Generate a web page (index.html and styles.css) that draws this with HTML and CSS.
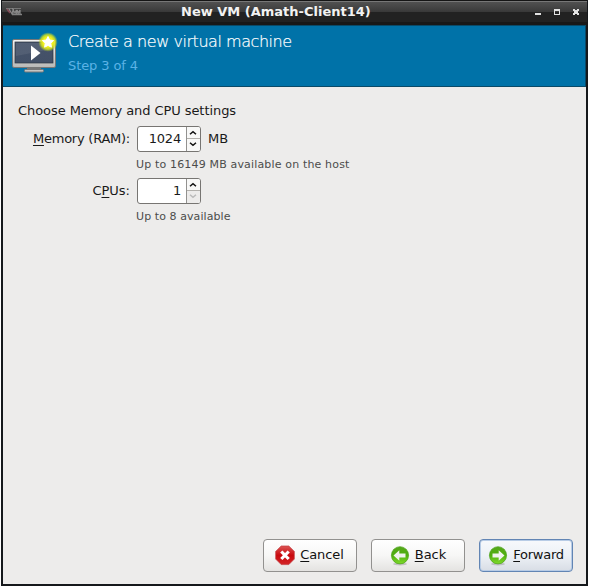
FILE: index.html
```html
<!DOCTYPE html>
<html lang="en">
<head>
<meta charset="utf-8">
<title>New VM (Amath-Client14)</title>
<link rel="stylesheet" href="styles.css">
</head>
<body>
<div class="window">
  <div class="titlebar">
    <svg class="app-icon" width="17" height="10" viewBox="0 0 17 10"><path d="M1 1.500h15" stroke="#999" opacity=".6"/><path d="M4 2l3 5 1.500-5M8 7V3l2 3 1.500-3v4M12 7V3l1.500 3L15 3v4M7 7.500h10" fill="none" stroke="#b5b5b5" stroke-width="1.300" opacity=".65"/><path d="M2 2l3 4" stroke="#a05565" stroke-width="1.500" opacity=".7"/></svg>
    <h1 class="caption">New VM (Amath-Client14)</h1>
    <svg class="controls" width="46" height="8" viewBox="0 0 46 8" shape-rendering="crispEdges" fill="#e2e2e2">
      <path d="M0 5h6v2H0z"/>
      <path fill-rule="evenodd" d="M19 1h6v6h-6zM20 3v3h4V3z"/>
      <path d="M38 1h2v1h2V1h2v2h-1v2h1v2h-2V6h-2v1h-2V5h1V3h-1z"/>
    </svg>
  </div>
  <div class="client">
    <header class="banner">
      <svg class="vm-icon" width="50" height="46" viewBox="0 0 50 46">
        <defs>
          <linearGradient id="frame" x1="0" y1="0" x2="0" y2="1"><stop offset="0" stop-color="#f4f4f4"/><stop offset="1" stop-color="#b9b9b7"/></linearGradient>
          <linearGradient id="screen" x1="0" y1="0" x2="0" y2="1"><stop offset="0" stop-color="#46536a"/><stop offset="1" stop-color="#435067"/></linearGradient>
          <radialGradient id="glow"><stop offset=".5" stop-color="#f4f41a"/><stop offset=".75" stop-color="#d9e51c" stop-opacity=".8"/><stop offset="1" stop-color="#b5d72a" stop-opacity="0"/></radialGradient>
        </defs>
        <path d="M17 36h14v4H17z" fill="#777"/>
        <rect x="14.500" y="39.500" width="19" height="2.500" rx="1" fill="#c5c5c3" stroke="#777"/>
        <rect x="2.500" y="9.500" width="43" height="28" rx="1.500" fill="url(#frame)" stroke="#777"/>
        <rect x="5" y="12" width="38" height="21" fill="url(#screen)" stroke="#2d3440" stroke-width=".7"/>
        <path d="M6 13h36v6L6 26z" fill="#fff" opacity=".08"/>
        <path d="M21 15.500l9.500 7.500-9.500 7.500z" fill="#fff"/>
        <circle cx="38" cy="12" r="9.800" fill="url(#glow)"/>
        <path d="M38 6.500l1.700 3.500 3.900.6-2.800 2.700.6 3.900-3.400-1.800-3.400 1.800.6-3.900-2.800-2.700 3.900-.6z" fill="#fff" stroke="#fff" stroke-linejoin="round"/>
      </svg>
      <div class="banner-text">
        <h2>Create a new virtual machine</h2>
        <p>Step 3 of 4</p>
      </div>
    </header>
    <main class="content">
      <p class="intro">Choose Memory and CPU settings</p>
      <div class="form">
        <label class="label memory"><u>M</u>emory (RAM):</label>
        <div class="field">
          <div class="spin"><span class="value">1024</span><svg width="14" height="24" viewBox="0 0 14 24"><path d="M0 0h14v24H0z" fill="#f8f8f7"/><path d="M0 0h1v24H0z" fill="#92918f"/><path d="M1 11.500h13" stroke="#b2b0ac"/><path d="M4 7.300l3-2.600 3 2.600M4 15.700l3 2.600 3-2.600" fill="none" stroke="#111" stroke-width="1.500"/></svg></div>
          <span class="unit">MB</span>
        </div>
        <p class="hint">Up to 16149 MB available on the host</p>
        <label class="label"><span>C<u>P</u>Us:</span></label>
        <div class="field">
          <div class="spin"><span class="value">1</span><svg width="14" height="24" viewBox="0 0 14 24"><path d="M0 0h14v24H0z" fill="#f8f8f7"/><path d="M1 12h13v12H1z" fill="#edeceb"/><path d="M0 0h1v24H0z" fill="#92918f"/><path d="M1 11.500h13" stroke="#b2b0ac"/><path d="M4 7.300l3-2.600 3 2.600" fill="none" stroke="#111" stroke-width="1.500"/><path d="M4 15.700l3 2.600 3-2.600" fill="none" stroke="#bbb" stroke-width="1.500"/></svg></div>
        </div>
        <p class="hint short">Up to 8 available</p>
      </div>
    </main>
    <footer class="actions">
      <button class="button cancel"><svg width="20" height="22" viewBox="0 0 20 22"><defs><linearGradient id="red" x1="0" y1="0" x2="0" y2="1"><stop offset="0" stop-color="#dc5555"/><stop offset=".5" stop-color="#c9090d"/><stop offset="1" stop-color="#d32528"/></linearGradient></defs><path d="M6.200 1h7.600L19.300 6.400v7.700L13.800 19.600H6.200L.7 14.100V6.400z" fill="url(#red)" stroke="#c33a3c" stroke-width=".7"/><path d="M6.300 6.500l7.400 7.500M13.700 6.500L6.300 14" stroke="#fff" stroke-width="3.200"/></svg><span><u>C</u>ancel</span></button>
      <button class="button back"><svg width="20" height="22" viewBox="0 0 20 22"><defs><linearGradient id="green" x1="0" y1="0" x2="0" y2="1"><stop offset="0" stop-color="#55a81b"/><stop offset=".5" stop-color="#4fae0d"/><stop offset="1" stop-color="#80dc2c"/></linearGradient></defs><ellipse cx="10" cy="19" rx="7" ry="1.500" fill="#999" opacity=".5"/><circle cx="10" cy="10.300" r="8.600" fill="url(#green)" stroke="#4ca11b" stroke-width=".7"/><path d="M3.500 10.500l5.800-5.300v3.300h6.200v4H9.300v3.300z" fill="#f0f3ee"/></svg><span><u>B</u>ack</span></button>
      <button class="button forward"><svg width="20" height="22" viewBox="0 0 20 22"><ellipse cx="10" cy="19" rx="7" ry="1.500" fill="#999" opacity=".5"/><circle cx="10" cy="10.300" r="8.600" fill="url(#green)" stroke="#4ca11b" stroke-width=".7"/><path d="M16.500 10.500l-5.800-5.300v3.300H4.500v4h6.200v3.300z" fill="#f0f3ee"/></svg><span><u>F</u>orward</span></button>
    </footer>
  </div>
</div>
</body>
</html>
```
FILE: styles.css
```css
* { box-sizing: border-box; }
body { margin: 0; background: #fff; font: 13px/16px "DejaVu Sans", sans-serif; color: #1a1a1a; overflow: hidden; }
h1, h2, p { margin: 0; font-weight: normal; }
u { text-underline-offset: 2px; text-decoration-thickness: 1px; text-decoration-skip-ink: none; }
.window { width: 587px; height: 586px; margin-left: 1px; background: #15181b; display: flex; flex-direction: column; }
.titlebar { height: 25px; flex: none; display: flex; padding: 0 6px 0 3px; background: linear-gradient(#151515 0 1px, #777 1px 2px, #515151 2px, #393939 12px, #222 12px 22px, #181818 22px); margin: 0 1px; }
.app-icon { margin-top: 7px; flex: none; }
.caption { font-size: 13px; font-weight: bold; line-height: 24px; color: #f2f2f2; white-space: nowrap; margin-left: 159px; }
.controls { margin: 8px 0 0 auto; flex: none; }
.client { flex: 1; margin: 0 2px 2px; background: #edeceb; display: flex; flex-direction: column; }
.banner { height: 62px; flex: none; background: #0072a8; border: 1px solid #0a4a68; border-left: 0; display: flex; padding: 4px 0 0 7px; }
.vm-icon { flex: none; margin-right: 8px; }
.banner-text { padding-top: 2px; }
.banner h2 { font-size: 16px; line-height: 20px; font-weight: 200; letter-spacing: -.45px; color: #fff; -webkit-text-stroke: .2px #fff; white-space: nowrap; }
.banner p { color: #5bb2e6; margin-top: 6px; letter-spacing: -.1px; }
.content { flex: 1; padding: 16px 15px; }
.intro { letter-spacing: -.07px; }
.form { display: grid; grid-template-columns: 112px 1fr; column-gap: 7px; margin-top: 7px; }
.label { text-align: right; line-height: 26px; white-space: nowrap; }
.memory { letter-spacing: -.24px; }
.field { display: flex; align-items: center; height: 26px; }
.spin { width: 64px; height: 26px; border: 1px solid #777572; border-radius: 3px; background: #fff; display: flex; overflow: hidden; }
.value { flex: 1; text-align: right; line-height: 24px; padding-right: 5px; letter-spacing: -.2px; }
.unit { margin-left: 7px; }
.hint { grid-column: 2; font-size: 11px; line-height: 14px; color: #4c4c4c; margin: 6px 0 6px -1px; letter-spacing: .16px; }
.short { letter-spacing: .08px; }
.actions { display: flex; justify-content: flex-end; gap: 14px; padding: 0 13px 12px 0; }
.button { width: 94px; height: 33px; padding: 0; border: 1px solid #92918f; border-radius: 4px; background: linear-gradient(#fff, #f7f7f6 50%, #e4e3e1); font: inherit; color: #111; display: flex; justify-content: center; align-items: center; gap: 5px; }
.button span { margin-top: -2px; }
.button svg { margin-left: -1px; }
.cancel { gap: 5px; letter-spacing: -.1px; }
.back { padding-left: 1px; }
.forward { padding-left: 1px; letter-spacing: -.25px; border-color: #6285b4; background: linear-gradient(#f7f9fc, #edf1f6 50%, #d8dde5); box-shadow: inset 0 0 0 1px #b8cce6; }
```
